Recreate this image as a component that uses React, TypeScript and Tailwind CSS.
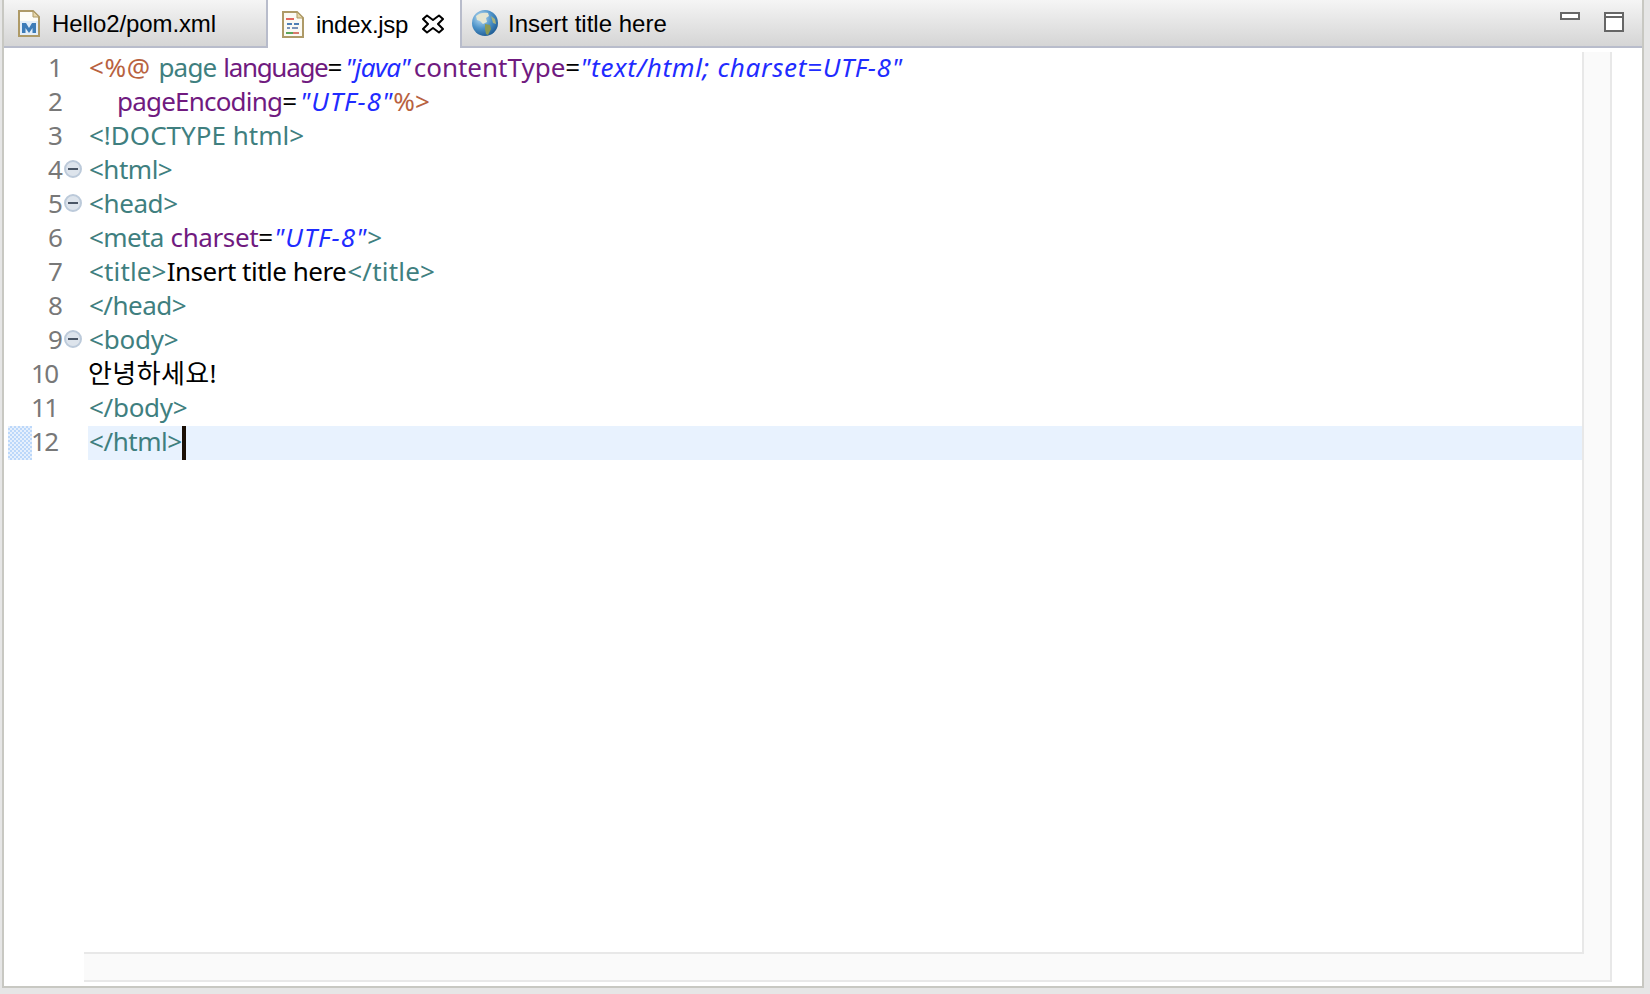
function PomIcon() {
  return (
    <svg width="24" height="27" viewBox="0 0 24 27" className="shrink-0">
      <path d="M2 1h14l6 6v19H2z" fill="#fdfcf6" stroke="#ae9a67" strokeWidth="2" />
      <path d="M16 1v6h6z" fill="#e6d6a8" stroke="#ae9a67" strokeWidth="1" />
      <path d="M3 11h18v14H3z" fill="#e4eef8" />
      <path d="M5 23v-10h4l3 5 3-5h4v10h-3.500v-5l-3.500 5-3.500-5v5z" fill="#3d7cb8" />
    </svg>
  );
}

function JspIcon() {
  return (
    <svg width="24" height="27" viewBox="0 0 24 27" className="shrink-0">
      <path d="M2 1h14l6 6v19H2z" fill="#fbfaf4" stroke="#ae9a67" strokeWidth="2" />
      <path d="M16 1v6h6z" fill="#e6d6a8" stroke="#ae9a67" strokeWidth="1" />
      <path d="M5 7h8v2H5z" fill="#e2675f" />
      <path d="M6 12h5v2H6zM13 12h5v2h-5z" fill="#4f7fb5" />
      <path d="M6 16h3v2H6zM11 16h6v2h-6z" fill="#7b93b8" />
      <path d="M5 21h7v2H5z" fill="#5aa55a" />
      <path d="M12 21h6v2h-6z" fill="#d77a6c" />
    </svg>
  );
}

function CloseIcon() {
  return (
    <svg width="22" height="20" viewBox="0 0 22 20" className="shrink-0">
      <path
        d="M5 1.500 11 6 17 1.500 21 5 16 10 21 15 17 18.500 11 14 5 18.500 1 15 6 10 1 5Z"
        fill="#fff"
        stroke="#000"
        strokeWidth="2"
        strokeLinejoin="round"
      />
    </svg>
  );
}

function GlobeIcon() {
  return (
    <svg width="28" height="28" viewBox="0 0 28 28" className="shrink-0">
      <defs>
        <radialGradient id="sea" cx="35%" cy="30%" r="75%">
          <stop offset="0" stopColor="#bfe0f5" />
          <stop offset="0.55" stopColor="#4d93c9" />
          <stop offset="1" stopColor="#1f5c94" />
        </radialGradient>
      </defs>
      <circle cx="14" cy="14" r="13" fill="url(#sea)" />
      <path d="M5 7c3-3 8-4 12-3l1 3-3 2 1 4-4 2-3-3-3-1z" fill="#e4e6d3" />
      <path d="M14 15l5 1 1 4-3 6-2-1-1-5z" fill="#8b9a55" />
      <path d="M20 7l4 3 1 5-3-1z" fill="#a9b37c" />
    </svg>
  );
}

function FoldIcon() {
  return (
    <span className="mt-[6px] flex h-[18px] w-[18px] items-center justify-center rounded-full border-2 border-[#bccada] bg-[#dde4ec]">
      <span className="h-[2px] w-[10px] bg-[#4a5666]" />
    </span>
  );
}

function Tag({ children, className = "" }: { children: React.ReactNode; className?: string }) {
  return <span className={`text-[#3f7f7f] ${className}`}>{children}</span>;
}

function Attr({ children, className = "" }: { children: React.ReactNode; className?: string }) {
  return <span className={`text-[#701a7f] ${className}`}>{children}</span>;
}

function Val({ children, className = "" }: { children: React.ReactNode; className?: string }) {
  return <span className={`text-[#1f2cff] italic ${className}`}>{children}</span>;
}

function Jsp({ children, className = "" }: { children: React.ReactNode; className?: string }) {
  return <span className={`text-[#b8623f] ${className}`}>{children}</span>;
}

const foldLines = [4, 5, 9];

function Gutter() {
  const lines = [1, 2, 3, 4, 5, 6, 7, 8, 9, 10, 11, 12];
  return (
    <div className="w-[80px] shrink-0">
      {lines.map((n) => (
        <div key={n} className="relative flex h-[34px] items-start leading-[30px] text-[#787878]">
          {n === 12 && (
            <span className="absolute left-[4px] top-0 h-[34px] w-[24px] bg-[#c4dcfa] bg-[repeating-conic-gradient(#bcd8fa_0_25%,#e6f0fd_0_50%)] bg-[length:4px_4px]" />
          )}
          <span className={n > 9 ? "ml-[27px] w-[33px] tracking-[-1.500px]" : "ml-[44px] w-[16px]"}>{n}</span>
          {foldLines.includes(n) && <FoldIcon />}
        </div>
      ))}
    </div>
  );
}

function CodeLine({ children, className = "" }: { children?: React.ReactNode; className?: string }) {
  return <div className={`h-[34px] pl-[1px] leading-[30px] whitespace-pre ${className}`}>{children}</div>;
}

export default function App() {
  return (
    <div className="h-[994px] w-[1650px] overflow-hidden bg-[#e6e6e6] pb-[6px] pl-[2px] pr-[6px]">
      <div className="flex h-full flex-col border-x-2 border-b-2 border-[#c8c8c2] bg-white">
        <div className="flex h-[48px] shrink-0 border-b-2 border-[#b8bccb] bg-gradient-to-b from-[#f5f5f5] to-[#d5d5d5] font-['Liberation_Sans',sans-serif] text-[24px] text-black">
          <div className="flex h-[46px] w-[264px] items-center border-r-2 border-[#b8bccb] pl-[13px]">
            <PomIcon />
            <span className="ml-[11px] mt-[2px] tracking-[-0.1px]">Hello2/pom.xml</span>
          </div>
          <div className="flex h-[48px] w-[194px] items-center border-r-2 border-[#b8bccb] bg-white pl-[13px]">
            <JspIcon />
            <span className="ml-[11px] mt-[2px] tracking-[-0.3px]">index.jsp</span>
            <span className="ml-[14px]">
              <CloseIcon />
            </span>
          </div>
          <div className="flex h-[46px] items-center pl-[9px]">
            <GlobeIcon />
            <span className="ml-[9px] mt-[2px]">Insert title here</span>
          </div>
          <div className="ml-auto flex items-start pr-[18px] pt-[12px]">
            <span className="h-[8px] w-[20px] border-2 border-[#666] bg-white" />
            <span className="ml-[24px] h-[20px] w-[20px] border-2 border-[#666] bg-white">
              <span className="mt-[2px] block h-[2px] bg-[#666]" />
            </span>
          </div>
        </div>
        <div className="flex min-h-0 flex-1 pb-[4px] pr-[30px] pt-[4px] font-['Noto_Sans','Noto_Sans_CJK_KR',sans-serif] text-[26px]">
          <Gutter />
          <div className="flex-1 border-b-2 border-r-2 border-[#e8e8e8] bg-[#fafafa] pb-[26px] pr-[26px]">
            <div className="h-full border-b-2 border-r-2 border-[#e8e8e8] bg-white pl-[4px] text-black">
              <CodeLine>
                <Jsp className="tracking-[0.6px]">&lt;%@</Jsp>{" "}
                <Tag className="ml-[1px] tracking-[-0.8px]">page</Tag>{" "}
                <Attr className="tracking-[-1.300px]">language</Attr>=<Val className="ml-[3px] tracking-[-0.7px]">"java"</Val>
                <Attr className="ml-[4px]">contentType</Attr>=<Val className="tracking-[0.7px]">"text/html; charset=UTF-8"</Val>
              </CodeLine>
              <CodeLine className="pl-[29px]">
                <Attr className="tracking-[-0.8px]">pageEncoding</Attr>=<Val className="ml-[3px] tracking-[1.050px]">"UTF-8"</Val>
                <Jsp className="tracking-[0.2px]">%&gt;</Jsp>
              </CodeLine>
              <CodeLine>
                <Tag>&lt;!DOCTYPE html&gt;</Tag>
              </CodeLine>
              <CodeLine>
                <Tag className="tracking-[-0.5px]">&lt;html&gt;</Tag>
              </CodeLine>
              <CodeLine>
                <Tag className="tracking-[-0.4px]">&lt;head&gt;</Tag>
              </CodeLine>
              <CodeLine>
                <Tag className="tracking-[-0.6px]">&lt;meta</Tag> <Attr className="tracking-[-0.4px]">charset</Attr>=<Val className="ml-[1px] tracking-[1.050px]">"UTF-8"</Val>
                <Tag>&gt;</Tag>
              </CodeLine>
              <CodeLine>
                <Tag className="tracking-[0.15px]">&lt;title&gt;</Tag>
                <span className="tracking-[-0.5px]">Insert title here</span>
                <Tag className="ml-[1px] tracking-[0.2px]">&lt;/title&gt;</Tag>
              </CodeLine>
              <CodeLine>
                <Tag className="tracking-[-0.5px]">&lt;/head&gt;</Tag>
              </CodeLine>
              <CodeLine>
                <Tag className="tracking-[-0.2px]">&lt;body&gt;</Tag>
              </CodeLine>
              <CodeLine className="-ml-[1px] tracking-[0.4px]">안녕하세요!</CodeLine>
              <CodeLine>
                <Tag className="tracking-[-0.3px]">&lt;/body&gt;</Tag>
              </CodeLine>
              <CodeLine className="flex items-start bg-[#e8f2fe]">
                <Tag className="tracking-[-0.45px]">&lt;/html&gt;</Tag>
                <span className="h-[34px] w-[4px] bg-[#1a0f05]" />
              </CodeLine>
            </div>
          </div>
        </div>
      </div>
    </div>
  );
}
